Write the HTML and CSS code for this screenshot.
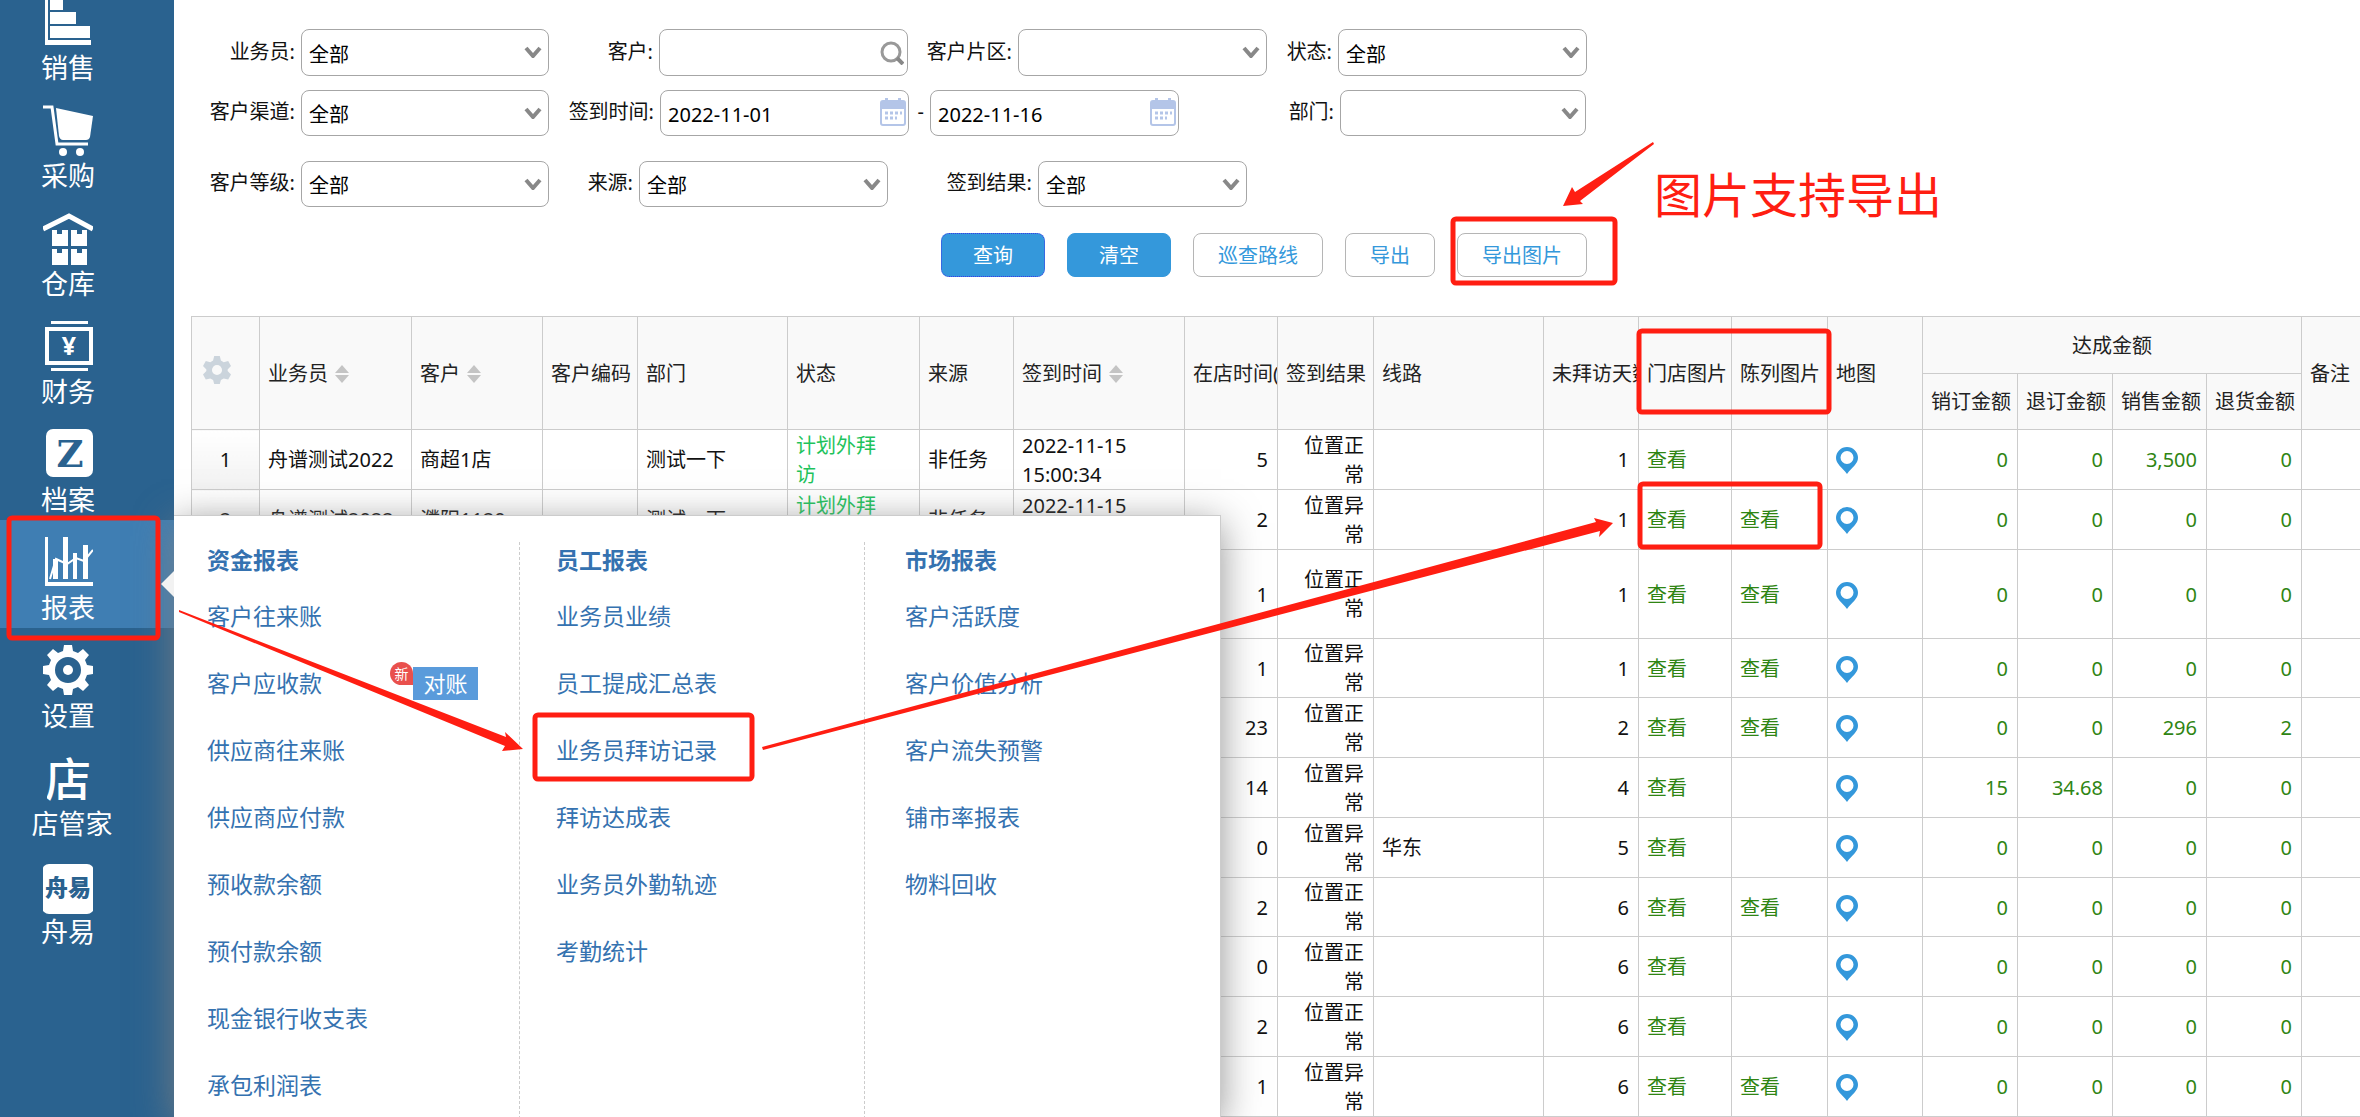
FILE: index.html
```html
<!DOCTYPE html>
<html lang="zh-CN">
<head>
<meta charset="utf-8">
<title>业务员拜访记录</title>
<link rel="stylesheet" href="styles.css">
</head>
<body>
<svg class="defs" aria-hidden="true">
  <symbol id="caret" viewBox="0 0 18 12"><path d="M2 2l7 8 7-8" fill="none" stroke="#888" stroke-width="4"/></symbol>
  <symbol id="calendar" viewBox="0 0 26 28">
    <rect x="1" y="3" width="24" height="24" rx="2" fill="#fff" stroke="#b4c5e8" stroke-width="2"/>
    <path d="M1 3h24v8H1zM5 0h3v4H5zM18 0h3v4h-3z" fill="#b4c5e8"/>
    <path d="M5 15h17M5 20h12" stroke="#b4c5e8" stroke-width="3" stroke-dasharray="3 2"/>
  </symbol>
  <symbol id="search" viewBox="0 0 24 24"><circle cx="11" cy="11" r="9" fill="none" stroke="#999" stroke-width="3"/><path d="M17 17l6 6" stroke="#888" stroke-width="4"/></symbol>
  <symbol id="sort" viewBox="0 0 14 18"><path d="M7 0l7 8H0zM0 10h14l-7 8z" fill="#c4c4c4"/></symbol>
  <symbol id="pin" viewBox="0 0 22 27"><path fill-rule="evenodd" d="M11 0a11 11 0 0 1 11 11c0 6-6 9-11 16C6 20 0 17 0 11A11 11 0 0 1 11 0zm0 4a6.500 6.500 0 1 0 0 13 6.500 6.500 0 0 0 0-13z" fill="#3498db"/></symbol>
</svg>

<div class="app">
  <nav class="sidebar">
    <ul class="nav">
      <li><a href="#"><svg viewBox="0 -1 50 54"><path d="M2-1h3v44h43v5H2zM7 0h13v13H7zM7 15h26v12H7zM7 29h40v12H7z"/></svg><span>销售</span></a></li>
      <li><a href="#"><svg viewBox="0 -1 50 54"><path d="M0 2h9l5 37h31" fill="none" stroke="#fff" stroke-width="3"/><path d="M13 3l37 8-3 21q-1 3-4 3H20q-3 0-4-4z"/><circle cx="20" cy="47" r="4"/><circle cx="37" cy="47" r="4"/></svg><span>采购</span></a></li>
      <li><a href="#"><svg viewBox="0 -1 50 54"><path d="M0 16L26 3l24 13" fill="none" stroke="#fff" stroke-width="5"/><path d="M9 17h5v4h5v-4h6v16H9zM28 17h6v4h5v-4h5v16H28zM9 36h5v4h5v-4h6v16H9zM28 36h6v4h5v-4h5v16H28z"/></svg><span>仓库</span></a></li>
      <li><a href="#"><svg viewBox="0 -1 50 54"><path d="M8 0h37v3H8zM8 47h37v3H8z"/><rect x="4" y="8" width="44" height="34" fill="none" stroke="#fff" stroke-width="4"/><text x="26" y="34" font-size="25" font-weight="700" text-anchor="middle">¥</text></svg><span>财务</span></a></li>
      <li><a href="#"><svg viewBox="0 -1 50 54"><rect x="3" y="0" width="47" height="48" rx="7"/><text class="cut serif" x="27" y="38" font-size="37" text-anchor="middle">Z</text></svg><span>档案</span></a></li>
      <li class="active"><a href="#"><svg viewBox="0 -1 50 54"><path d="M2 0h3v45h45v4H2zM10 22h5v20h-5zM20 0h5v42h-5zM30 16h4v26h-4zM40 8h5v34h-5z"/><path d="M7 42l6-20 11 5 9-6 8 3 9-11" fill="none" stroke="#fff" stroke-width="2"/></svg><span>报表</span></a></li>
      <li><a href="#"><svg viewBox="0 -1 50 54"><path fill-rule="evenodd" d="M21 0h8l1 6 5 2 5-4 6 6-4 5 2 5 6 1v8l-6 1-2 5 4 5-6 6-5-4-5 2-1 6h-8l-1-6-5-2-5 4-6-6 4-5-2-5-6-1v-8l6-1 2-5-4-5 6-6 5 4 5-2zM25 12a13 13 0 1 0 0 26 13 13 0 0 0 0-26z"/><circle cx="25" cy="25" r="5"/></svg><span>设置</span></a></li>
      <li class="wide"><a href="#"><svg viewBox="4 -1 50 54"><text x="25" y="43" font-size="46" font-weight="500" text-anchor="middle">店</text></svg><span>店管家</span></a></li>
      <li><a href="#"><svg viewBox="0 -1 50 54"><rect x="-1" y="3" width="52" height="50" rx="7"/><text class="cut" x="25" y="35" font-size="23" text-anchor="middle">舟易</text></svg><span>舟易</span></a></li>
    </ul>
  </nav>

  <main class="main">
    <form class="filters">
      <div class="row row-1">
        <label for="f1">业务员:</label>
        <div class="field"><select id="f1"><option>全部</option></select><svg class="caret"><use href="#caret"/></svg></div>
        <label for="f2">客户:</label>
        <div class="field"><input id="f2" type="text"><svg class="search"><use href="#search"/></svg></div>
        <label for="f3">客户片区:</label>
        <div class="field"><select id="f3"><option></option></select><svg class="caret"><use href="#caret"/></svg></div>
        <label for="f4">状态:</label>
        <div class="field"><select id="f4"><option>全部</option></select><svg class="caret"><use href="#caret"/></svg></div>
      </div>
      <div class="row row-2">
        <label for="f5">客户渠道:</label>
        <div class="field"><select id="f5"><option>全部</option></select><svg class="caret"><use href="#caret"/></svg></div>
        <label for="f6">签到时间:</label>
        <div class="field"><input id="f6" type="text" value="2022-11-01"><svg class="calendar"><use href="#calendar"/></svg></div>
        <label for="f7">-</label>
        <div class="field"><input id="f7" type="text" value="2022-11-16"><svg class="calendar"><use href="#calendar"/></svg></div>
        <label for="f8">部门:</label>
        <div class="field"><select id="f8"><option></option></select><svg class="caret"><use href="#caret"/></svg></div>
      </div>
      <div class="row row-3">
        <label for="f9">客户等级:</label>
        <div class="field"><select id="f9"><option>全部</option></select><svg class="caret"><use href="#caret"/></svg></div>
        <label for="f10">来源:</label>
        <div class="field"><select id="f10"><option>全部</option></select><svg class="caret"><use href="#caret"/></svg></div>
        <label for="f11">签到结果:</label>
        <div class="field"><select id="f11"><option>全部</option></select><svg class="caret"><use href="#caret"/></svg></div>
      </div>
      <div class="actions">
        <button type="button" class="btn primary focused">查询</button>
        <button type="button" class="btn primary">清空</button>
        <button type="button" class="btn long">巡查路线</button>
        <button type="button" class="btn short">导出</button>
        <button type="button" class="btn long">导出图片</button>
      </div>
    </form>

    <div class="table-wrap">
      <table>
        <colgroup>
          <col class="w68"><col class="w152"><col class="w131"><col class="w95"><col class="w150"><col class="w132"><col class="w94"><col class="w171"><col class="w93"><col class="w96"><col class="w170"><col class="w95"><col class="w93"><col class="w96"><col class="w95"><col class="w95"><col class="w95"><col class="w94"><col class="w95"><col class="w95">
        </colgroup>
        <thead>
          <tr>
            <th rowspan="2" class="center"><svg class="gear" viewBox="0 0 50 50"><path fill-rule="evenodd" d="M20 0h10l2 8 5 3 8-2 5 9-6 6v3l6 6-5 9-8-2-5 3-2 7H20l-2-7-5-3-8 2-5-9 6-6v-3l-6-6 5-9 8 2 5-3zM25 16a9 9 0 1 0 0 18 9 9 0 0 0 0-18z" fill="#cbd4dc"/></svg></th>
            <th rowspan="2">业务员<svg class="sort"><use href="#sort"/></svg></th>
            <th rowspan="2">客户<svg class="sort"><use href="#sort"/></svg></th>
            <th rowspan="2">客户编码</th>
            <th rowspan="2">部门</th>
            <th rowspan="2">状态</th>
            <th rowspan="2">来源</th>
            <th rowspan="2">签到时间<svg class="sort"><use href="#sort"/></svg></th>
            <th rowspan="2">在店时间(</th>
            <th rowspan="2">签到结果</th>
            <th rowspan="2">线路</th>
            <th rowspan="2">未拜访天数</th>
            <th rowspan="2">门店图片</th>
            <th rowspan="2">陈列图片</th>
            <th rowspan="2">地图</th>
            <th colspan="4" class="center">达成金额</th>
            <th rowspan="2">备注</th>
          </tr>
          <tr><th>销订金额</th><th>退订金额</th><th>销售金额</th><th>退货金额</th></tr>
        </thead>
        <tbody>
          <tr><td class="no">1</td><td>舟谱测试2022</td><td>商超1店</td><td></td><td>测试一下</td><td class="status">计划外拜<br>访</td><td>非任务</td><td>2022-11-15<br>15:00:34</td><td class="num">5</td><td class="num">位置正<br>常</td><td></td><td class="num">1</td><td><a href="#">查看</a></td><td></td><td><svg class="pin"><use href="#pin"/></svg></td><td class="amt">0</td><td class="amt">0</td><td class="amt">3,500</td><td class="amt">0</td><td></td></tr>
          <tr><td class="no">2</td><td>舟谱测试2022</td><td>濮阳1120</td><td></td><td>测试一下</td><td class="status">计划外拜<br>访</td><td>非任务</td><td>2022-11-15<br>&nbsp;</td><td class="num">2</td><td class="num">位置异<br>常</td><td></td><td class="num">1</td><td><a href="#">查看</a></td><td><a href="#">查看</a></td><td><svg class="pin"><use href="#pin"/></svg></td><td class="amt">0</td><td class="amt">0</td><td class="amt">0</td><td class="amt">0</td><td></td></tr>
          <tr class="tall"><td class="no"></td><td></td><td></td><td></td><td></td><td></td><td></td><td></td><td class="num">1</td><td class="num">位置正<br>常</td><td></td><td class="num">1</td><td><a href="#">查看</a></td><td><a href="#">查看</a></td><td><svg class="pin"><use href="#pin"/></svg></td><td class="amt">0</td><td class="amt">0</td><td class="amt">0</td><td class="amt">0</td><td></td></tr>
          <tr><td class="no"></td><td></td><td></td><td></td><td></td><td></td><td></td><td></td><td class="num">1</td><td class="num">位置异<br>常</td><td></td><td class="num">1</td><td><a href="#">查看</a></td><td><a href="#">查看</a></td><td><svg class="pin"><use href="#pin"/></svg></td><td class="amt">0</td><td class="amt">0</td><td class="amt">0</td><td class="amt">0</td><td></td></tr>
          <tr><td class="no"></td><td></td><td></td><td></td><td></td><td></td><td></td><td></td><td class="num">23</td><td class="num">位置正<br>常</td><td></td><td class="num">2</td><td><a href="#">查看</a></td><td><a href="#">查看</a></td><td><svg class="pin"><use href="#pin"/></svg></td><td class="amt">0</td><td class="amt">0</td><td class="amt">296</td><td class="amt">2</td><td></td></tr>
          <tr><td class="no"></td><td></td><td></td><td></td><td></td><td></td><td></td><td></td><td class="num">14</td><td class="num">位置异<br>常</td><td></td><td class="num">4</td><td><a href="#">查看</a></td><td></td><td><svg class="pin"><use href="#pin"/></svg></td><td class="amt">15</td><td class="amt">34.68</td><td class="amt">0</td><td class="amt">0</td><td></td></tr>
          <tr><td class="no"></td><td></td><td></td><td></td><td></td><td></td><td></td><td></td><td class="num">0</td><td class="num">位置异<br>常</td><td>华东</td><td class="num">5</td><td><a href="#">查看</a></td><td></td><td><svg class="pin"><use href="#pin"/></svg></td><td class="amt">0</td><td class="amt">0</td><td class="amt">0</td><td class="amt">0</td><td></td></tr>
          <tr><td class="no"></td><td></td><td></td><td></td><td></td><td></td><td></td><td></td><td class="num">2</td><td class="num">位置正<br>常</td><td></td><td class="num">6</td><td><a href="#">查看</a></td><td><a href="#">查看</a></td><td><svg class="pin"><use href="#pin"/></svg></td><td class="amt">0</td><td class="amt">0</td><td class="amt">0</td><td class="amt">0</td><td></td></tr>
          <tr><td class="no"></td><td></td><td></td><td></td><td></td><td></td><td></td><td></td><td class="num">0</td><td class="num">位置正<br>常</td><td></td><td class="num">6</td><td><a href="#">查看</a></td><td></td><td><svg class="pin"><use href="#pin"/></svg></td><td class="amt">0</td><td class="amt">0</td><td class="amt">0</td><td class="amt">0</td><td></td></tr>
          <tr><td class="no"></td><td></td><td></td><td></td><td></td><td></td><td></td><td></td><td class="num">2</td><td class="num">位置正<br>常</td><td></td><td class="num">6</td><td><a href="#">查看</a></td><td></td><td><svg class="pin"><use href="#pin"/></svg></td><td class="amt">0</td><td class="amt">0</td><td class="amt">0</td><td class="amt">0</td><td></td></tr>
          <tr><td class="no"></td><td></td><td></td><td></td><td></td><td></td><td></td><td></td><td class="num">1</td><td class="num">位置异<br>常</td><td></td><td class="num">6</td><td><a href="#">查看</a></td><td><a href="#">查看</a></td><td><svg class="pin"><use href="#pin"/></svg></td><td class="amt">0</td><td class="amt">0</td><td class="amt">0</td><td class="amt">0</td><td></td></tr>
        </tbody>
      </table>
    </div>
  </main>

  <section class="popup">
    <div class="group">
      <h2>资金报表</h2>
      <a href="#">客户往来账</a>
      <div class="with-badge"><a href="#">客户应收款</a><button type="button" class="check">对账<span class="new">新</span></button></div>
      <a href="#">供应商往来账</a>
      <a href="#">供应商应付款</a>
      <a href="#">预收款余额</a>
      <a href="#">预付款余额</a>
      <a href="#">现金银行收支表</a>
      <a href="#">承包利润表</a>
    </div>
    <div class="group">
      <h2>员工报表</h2>
      <a href="#">业务员业绩</a>
      <a href="#">员工提成汇总表</a>
      <a href="#">业务员拜访记录</a>
      <a href="#">拜访达成表</a>
      <a href="#">业务员外勤轨迹</a>
      <a href="#">考勤统计</a>
    </div>
    <div class="group">
      <h2>市场报表</h2>
      <a href="#">客户活跃度</a>
      <a href="#">客户价值分析</a>
      <a href="#">客户流失预警</a>
      <a href="#">铺市率报表</a>
      <a href="#">物料回收</a>
    </div>
  </section>

  <svg class="notes" width="2360" height="1117" viewBox="0 0 2360 1117">
    <g fill="none" stroke="#ff1e12" stroke-width="5">
      <rect x="9" y="518" width="149" height="120" rx="3"/>
      <rect x="1453" y="219" width="162" height="64" rx="3"/>
      <rect x="1639" y="331" width="190" height="81" rx="3"/>
      <rect x="1640" y="484" width="180" height="63" rx="3"/>
      <rect x="535" y="715" width="217" height="64" rx="3"/>
    </g>
    <g fill="#ff1e12">
      <path d="M1653 142l1 2-74 57 3 3-20 2 9-19 3 5z"/>
      <path d="M179 610l327 127-1-5 18 17-21 2 3-5L179 612z"/>
      <path d="M762 747l834-225-2-4 19 5-14 14 1-6L763 750z"/>
      <text x="1654" y="213" font-size="48">图片支持导出</text>
    </g>
  </svg>
</div>
</body>
</html>
```
FILE: styles.css
```css
* { box-sizing: border-box; }

body {
  margin: 0;
  overflow: hidden;
  background: #fff;
  color: #111;
  font: 20px/29px "Noto Sans", "Noto Sans CJK SC", sans-serif;
}

a { color: inherit; text-decoration: none; }

.defs { position: absolute; width: 0; height: 0; }

.app {
  position: relative;
  display: flex;
  height: 100vh;
  overflow: hidden;
}

/* Sidebar */
.sidebar {
  flex: 0 0 174px;
  overflow: hidden;
  background: #2a628f;
  color: #fff;
}

.nav {
  margin: -20px 0 0;
  padding: 0;
  list-style: none;
}

.nav a {
  display: flex;
  flex-direction: column;
  align-items: center;
  width: 136px;
  height: 108px;
  padding-top: 16px;
  font-size: 27px;
  line-height: 36px;
}

.nav svg { width: 50px; height: 54px; fill: #fff; }
.nav .active { background: #3f7eb3; }
.nav .wide a { width: 144px; }
.nav .cut { fill: #2a628f; font-weight: 900; }
.nav .serif { font-family: "DejaVu Serif", serif; }

/* Filters */
.main {
  flex: 1;
  min-width: 0;
  padding: 29px 0 0 17px;
}

.row { display: grid; align-items: center; }
.row-1 { grid-template-columns: 110px 248px 110px 249px 110px 249px 71px 249px; margin-bottom: 14px; }
.row-2 { grid-template-columns: 110px 248px 111px 249px 21px 249px 161px 246px; margin-bottom: 25px; }
.row-3 { grid-template-columns: 110px 248px 90px 249px 150px 209px; margin-bottom: 26px; }
.row label { padding: 0 6px 3px 0; text-align: right; white-space: nowrap; }

.field { position: relative; }

.field select,
.field input {
  display: block;
  width: 100%;
  height: 46px;
  padding: 3px 34px 0 7px;
  border: 1px solid #a6a6a6;
  border-radius: 8px;
  background: #fff;
  color: #000;
  font: inherit;
  appearance: none;
}

.row-1 select,
.row-1 input { height: 47px; }

.field svg { position: absolute; pointer-events: none; }
.caret { top: 17px; right: 7px; width: 18px; height: 12px; }
.calendar { top: 8px; right: 3px; width: 26px; height: 28px; }
.search { top: 12px; right: 4px; width: 24px; height: 24px; }

.actions {
  display: flex;
  gap: 22px;
  padding-left: 750px;
}

.btn {
  width: 104px;
  height: 44px;
  padding: 0;
  border: 1px solid #b5b5b5;
  border-radius: 8px;
  background: #fff;
  color: #3498db;
  font: inherit;
}

.primary { border-color: #3498db; background: #3498db; color: #fff; }
.focused { border: 1px dotted #3a3ae8; }
.long { width: 130px; }
.short { width: 90px; }

/* Visit table */
.table-wrap { margin-top: 39px; overflow: hidden; }

table {
  width: 2205px;
  table-layout: fixed;
  border-collapse: collapse;
}

.w68 { width: 68px; }
.w93 { width: 93px; }
.w94 { width: 94px; }
.w95 { width: 95px; }
.w96 { width: 96px; }
.w131 { width: 131px; }
.w132 { width: 132px; }
.w150 { width: 150px; }
.w152 { width: 152px; }
.w170 { width: 170px; }
.w171 { width: 171px; }

th, td {
  padding: 0 0 0 8px;
  border: 1px solid #ccc;
  overflow: hidden;
  text-align: left;
  white-space: nowrap;
}

th { height: 57px; background: #f9f9f9; color: #222; font-weight: 400; }
thead tr + tr th { height: 56px; }
th.center { padding: 0; text-align: center; }
tbody tr { height: 60px; }
tbody tr:nth-child(4n) { height: 59px; }
tbody .tall { height: 89px; }

td.no { padding: 0; text-align: center; background: linear-gradient(#fff, #f2f2f2); }
td.num, td.amt { padding: 0 9px 0 0; text-align: right; }
td a, td.amt { color: #2f8513; }
td.status { color: #1ec35c; }

.gear { display: inline-block; width: 28px; height: 28px; margin: 0 18px 6px 0; vertical-align: middle; }
.sort { width: 14px; height: 18px; margin-left: 7px; vertical-align: -2px; }
.pin { display: block; width: 22px; height: 27px; margin-top: 2px; }

/* Report menu */
.popup {
  position: absolute;
  top: 515px;
  bottom: 0;
  left: 174px;
  display: grid;
  grid-template-columns: 346px 345px 1fr;
  width: 1047px;
  padding-top: 26px;
  border: 1px solid #ccc;
  border-width: 1px 1px 0 0;
  background: #fff;
  box-shadow: 0 8px 36px rgba(128, 128, 128, .85);
  color: #3572b0;
  font-size: 23px;
}

.popup::before {
  content: "";
  position: absolute;
  top: 55px;
  left: -13px;
  border: solid transparent;
  border-width: 13px 13px 13px 0;
  border-right-color: #f2f2f2;
}

.group {
  display: flex;
  flex-direction: column;
  padding-left: 33px;
  border-right: 1px dashed #ccc;
  line-height: 67px;
}

.group:nth-child(2) { padding-left: 36px; }
.group:nth-child(3) { padding-left: 40px; border-right: 0; }
.group h2 { margin: 0 0 5px; font-size: 23px; line-height: 36px; }

.with-badge { display: flex; align-items: center; justify-content: space-between; padding-right: 41px; }

.check {
  position: relative;
  width: 65px;
  height: 33px;
  padding: 0;
  border: 0;
  background: #5a9bdb;
  color: #fff;
  font: 22px/33px "Noto Sans", "Noto Sans CJK SC", sans-serif;
}

.new {
  position: absolute;
  top: -5px;
  right: 65px;
  width: 23px;
  border-radius: 12px 12px 0 12px;
  background: #e9504d;
  font-size: 14px;
  line-height: 23px;
}

/* Callouts drawn over the page */
.notes { position: absolute; top: 0; left: 0; pointer-events: none; }
```
